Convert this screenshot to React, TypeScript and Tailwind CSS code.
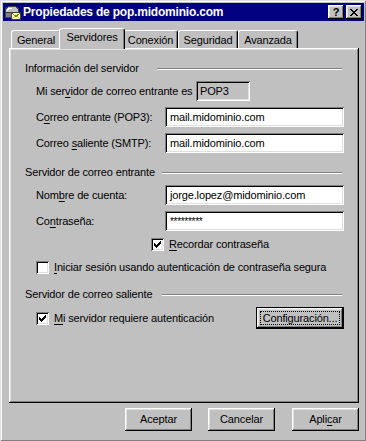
import type { ReactNode } from 'react';

const raised =
  'shadow-[inset_-1px_-1px_0_#000,inset_1px_1px_0_#fff,inset_-2px_-2px_0_#808080,inset_2px_2px_0_#dfdfdf]';
const sunken =
  'shadow-[inset_1px_1px_0_#808080,inset_-1px_-1px_0_#fff,inset_2px_2px_0_#000,inset_-2px_-2px_0_#dfdfdf]';

const tabs = [
  { label: 'General', w: 'w-[50px]' },
  { label: 'Servidores', w: 'w-[66px]', selected: true },
  { label: 'Conexión', w: 'w-[55px]' },
  { label: 'Seguridad', w: 'w-[60px]' },
  { label: 'Avanzada', w: 'w-[60px]' },
];

function U({ children }: { children: ReactNode }) {
  return <span className="underline underline-offset-[2px]">{children}</span>;
}

function MailIcon() {
  return (
    <svg width="17" height="16" viewBox="0 0 17 16" shapeRendering="crispEdges">
      <path d="M1 8 Q1 2 8 2 Q15 2 15 8 Z" fill="#c0c0c0" stroke="#404040" />
      <path d="M3 7 Q4 4 8 4" fill="none" stroke="#fff" />
      <rect x="1.5" y="8.5" width="7" height="5" fill="#808080" stroke="#404040" />
      <rect x="7.5" y="8.5" width="9" height="7" fill="#ffffc0" stroke="#404040" />
      <path d="M8 9 L12 12.5 L16 9" fill="none" stroke="#808000" />
      <path d="M8 15 L11 12 M16 15 L13 12" fill="none" stroke="#c0c080" />
    </svg>
  );
}

function CloseGlyph() {
  const rows: number[][] = [
    [0, 1, 6, 7],
    [1, 2, 5, 6],
    [2, 3, 4, 5],
    [3, 4],
    [2, 3, 4, 5],
    [1, 2, 5, 6],
    [0, 1, 6, 7],
  ];
  return (
    <svg width="8" height="7" shapeRendering="crispEdges">
      {rows.map((r, y) => r.map((x) => <rect key={`${x}-${y}`} x={x} y={y} width="1" height="1" fill="#000" />))}
    </svg>
  );
}

function TitleButton({ children }: { children: ReactNode }) {
  return (
    <div className={`flex h-[14px] w-[16px] items-center justify-center bg-[#c0c0c0] ${raised}`}>{children}</div>
  );
}

function Field({ value, className = '' }: { value: ReactNode; className?: string }) {
  return (
    <div className={`flex h-[20px] w-[179px] shrink-0 items-center bg-white pl-[5px] ${sunken} ${className}`}>
      {value}
    </div>
  );
}

function Check({ checked }: { checked?: boolean }) {
  const tops = [5, 6, 7, 6, 5, 4, 3];
  return (
    <div className={`h-[13px] w-[13px] shrink-0 bg-white ${sunken}`}>
      {checked && (
        <svg width="13" height="13" shapeRendering="crispEdges">
          {tops.map((t, i) => (
            <rect key={i} x={3 + i} y={t} width="1" height="3" fill="#000" />
          ))}
        </svg>
      )}
    </div>
  );
}

function GroupHeader({ title, textW }: { title: string; textW: string }) {
  return (
    <div className="flex h-[13px] items-center pl-[16px] pr-[17px]">
      <span className={`${textW} shrink-0`}>{title}</span>
      <div className="h-[2px] flex-1 border-t border-b border-t-[#808080] border-b-white" />
    </div>
  );
}

function Button({ children, className = '' }: { children: ReactNode; className?: string }) {
  return (
    <div className={`flex h-[23px] w-[67px] items-center justify-center bg-[#c0c0c0] ${raised} ${className}`}>
      {children}
    </div>
  );
}

export default function App() {
  return (
    <div className="h-[441px] w-[366px] overflow-hidden bg-[#c0c0c0] font-['Liberation_Sans',Arial,sans-serif] text-[11px] leading-[13px] tracking-[-0.15px] text-black">
      <div className="flex h-[442px] w-[367px] flex-col p-[3px] shadow-[inset_-1px_-1px_0_#000,inset_1px_1px_0_#dfdfdf,inset_-2px_-2px_0_#808080,inset_2px_2px_0_#fff]">
        {/* title bar */}
        <div className="flex h-[18px] items-center bg-[#000080] pl-[1px] pr-[2px]">
          <MailIcon />
          <span className="ml-[2px] text-[12px] font-bold tracking-[-0.2px] text-white">
            Propiedades de pop.midominio.com
          </span>
          <div className="ml-auto flex gap-[2px]">
            <TitleButton>
              <span className="text-[11px] font-bold leading-none">?</span>
            </TitleButton>
            <TitleButton>
              <CloseGlyph />
            </TitleButton>
          </div>
        </div>

        {/* tabs */}
        <div className="mt-[7px] ml-[6px] flex h-[20px] items-end pl-[2px]">
          {tabs.map((t) => (
            <div
              key={t.label}
              className={`relative flex shrink-0 justify-center rounded-t-[3px] border-t border-r border-l border-t-white border-r-black border-l-white bg-[#c0c0c0] shadow-[inset_-1px_0_0_#808080] ${t.w} ${
                t.selected ? 'z-10 -mx-[2px] -mb-px h-[21px] pt-[2px]' : 'h-[18px] pt-[3px]'
              }`}
            >
              {t.label}
            </div>
          ))}
        </div>

        {/* panel */}
        <div className={`ml-[6px] flex h-[355px] w-[350px] flex-col pt-[14px] ${raised}`}>
          <GroupHeader title="Información del servidor" textW="w-[132px]" />

          <div className="mt-[6px] flex h-[20px] items-center pl-[27px]">
            <span className="w-[160px] shrink-0">
              Mi ser<U>v</U>idor de correo entrante es
            </span>
            <div className={`flex h-[20px] w-[54px] items-center bg-[#c0c0c0] pl-[4px] ${sunken}`}>POP3</div>
          </div>

          <div className="mt-[6px] flex h-[20px] items-center pl-[27px]">
            <span className="w-[129px] shrink-0">
              C<U>o</U>rreo entrante (POP3):
            </span>
            <Field value="mail.midominio.com" />
          </div>

          <div className="mt-[6px] flex h-[20px] items-center pl-[27px]">
            <span className="w-[129px] shrink-0">
              Correo <U>s</U>aliente (SMTP):
            </span>
            <Field value="mail.midominio.com" />
          </div>

          <div className="mt-[13px]">
            <GroupHeader title="Servidor de correo entrante" textW="w-[137px]" />
          </div>

          <div className="mt-[6px] flex h-[20px] items-center pl-[27px]">
            <span className="w-[129px] shrink-0">
              Nom<U>b</U>re de cuenta:
            </span>
            <Field value="jorge.lopez@midominio.com" />
          </div>

          <div className="mt-[6px] flex h-[20px] items-center pl-[27px]">
            <span className="w-[129px] shrink-0">
              Co<U>n</U>traseña:
            </span>
            <Field value={<span className="text-[10px] tracking-[-0.3px]">*********</span>} />
          </div>

          <div className="mt-[7px] flex h-[13px] items-center pl-[142px]">
            <Check checked />
            <span className="ml-[5px]">
              <U>R</U>ecordar contraseña
            </span>
          </div>

          <div className="mt-[10px] flex h-[13px] items-center pl-[27px]">
            <Check />
            <span className="ml-[5px]">
              <U>I</U>niciar sesión usando autenticación de contraseña segura
            </span>
          </div>

          <div className="mt-[14px]">
            <GroupHeader title="Servidor de correo saliente" textW="w-[137px]" />
          </div>

          <div className="mt-[6px] flex h-[22px] items-center pl-[27px] pr-[15px]">
            <Check checked />
            <span className="ml-[5px]">
              <U>M</U>i servidor requiere autenticación
            </span>
            <div
              className={`ml-auto flex h-[22px] w-[88px] border border-black bg-[#c0c0c0] p-[3px] ${raised}`}
            >
              <div className="flex flex-1 items-center justify-center border border-dotted border-black">
                Confi<U>g</U>uración...
              </div>
            </div>
          </div>
        </div>

        {/* bottom buttons */}
        <div className="mt-[5px] ml-[6px] flex w-[350px] justify-end">
          <Button>Aceptar</Button>
          <Button className="ml-[16px]">Cancelar</Button>
          <Button className="ml-[17px]">
            Apli<U>c</U>ar
          </Button>
        </div>
      </div>
    </div>
  );
}
